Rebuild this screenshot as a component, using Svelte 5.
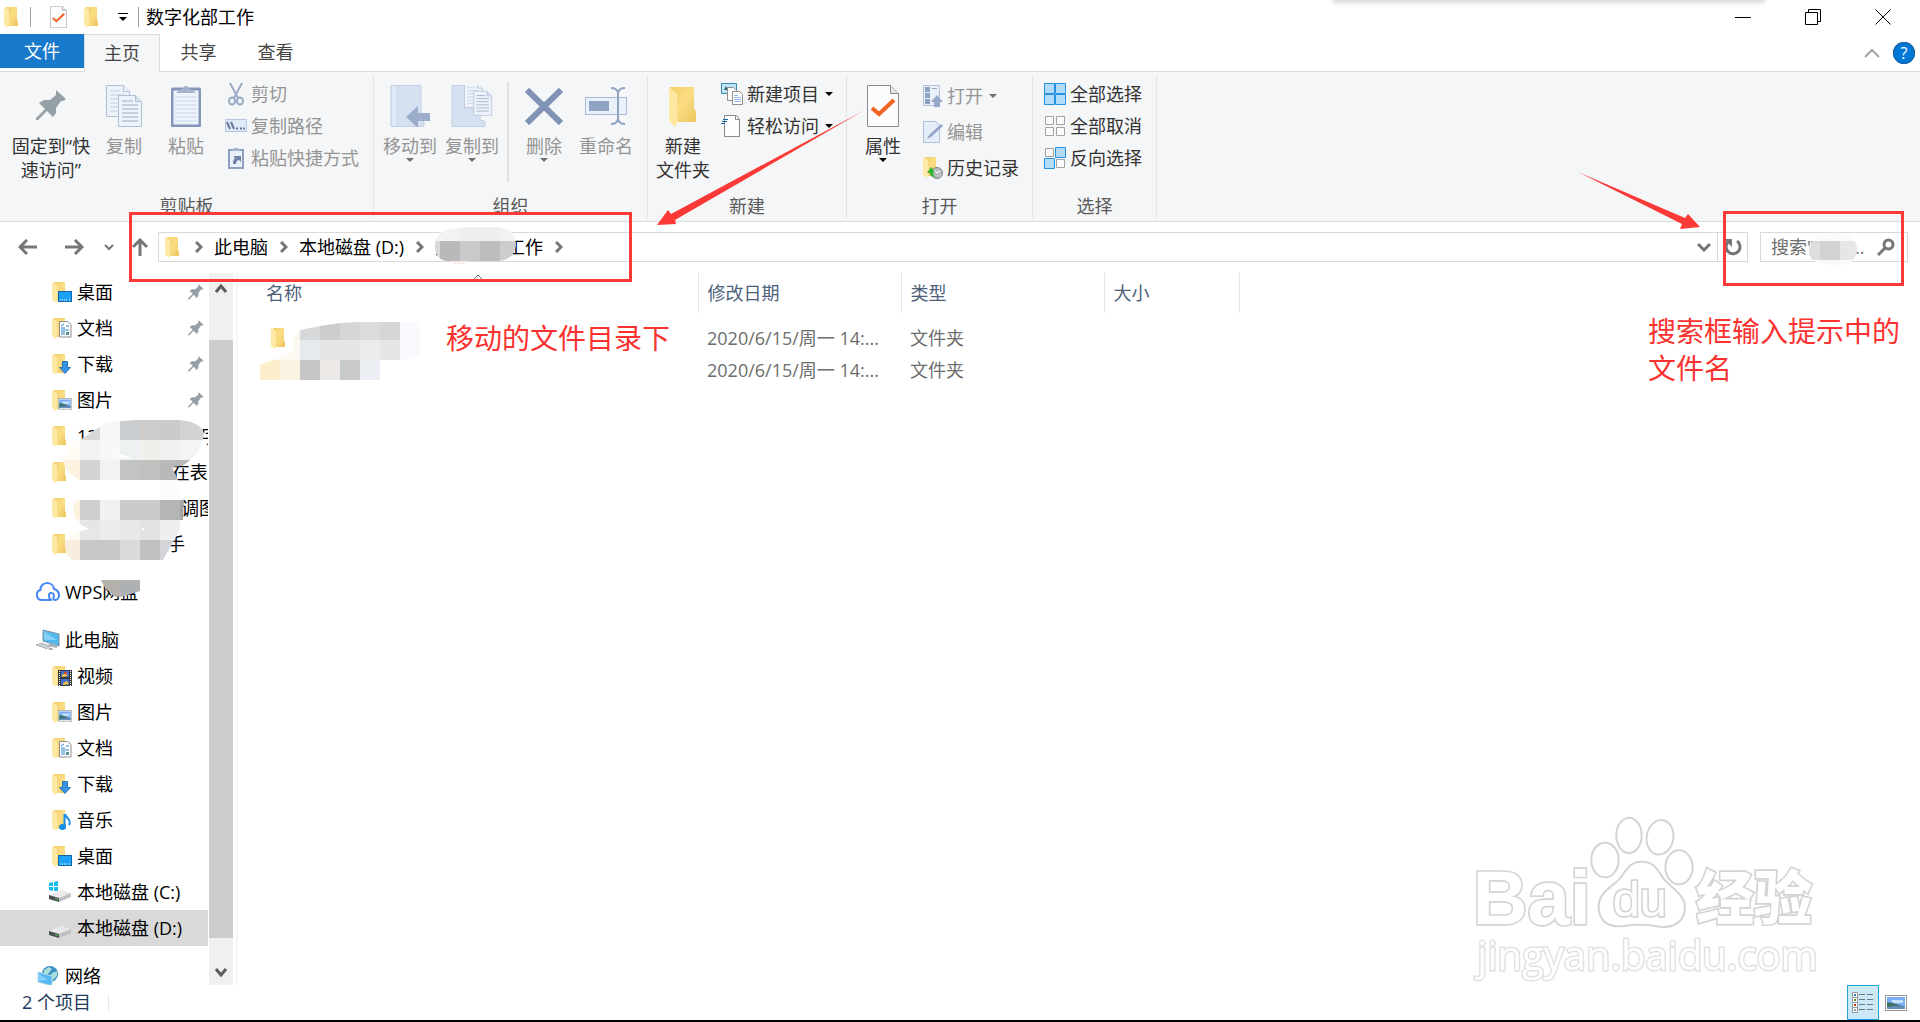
<script>
  const tabs = ['共享', '查看'];

  const quickAccess = [
    { icon: 'desktop', name: '桌面', pinned: true },
    { icon: 'document', name: '文档', pinned: true },
    { icon: 'download', name: '下载', pinned: true },
    { icon: 'picture', name: '图片', pinned: true },
    { icon: 'folder', name: '12\u3000\u3000\u3000\u3000\u3000   字' },
    { icon: 'folder', name: '\u3000\u3000\u3000\u3000\u3000 在表' },
    { icon: 'folder', name: '\u3000\u3000\u3000\u3000\u3000   调图' },
    { icon: 'folder', name: '\u3000\u3000\u3000\u3000\u3000手' },
  ];

  const thisPc = [
    { icon: 'video', name: '视频' },
    { icon: 'picture', name: '图片' },
    { icon: 'document', name: '文档' },
    { icon: 'download', name: '下载' },
    { icon: 'music', name: '音乐' },
    { icon: 'desktop', name: '桌面' },
    { icon: 'system-drive', name: '本地磁盘 (C:)' },
    { icon: 'drive', name: '本地磁盘 (D:)', selected: true },
  ];

  const crumbs = ['此电脑', '本地磁盘 (D:)', '数字化部工作'];

  const columns = ['名称', '修改日期', '类型', '大小'];

  const files = [
    { icon: true, date: '2020/6/15/周一 14:...', type: '文件夹' },
    { icon: false, date: '2020/6/15/周一 14:...', type: '文件夹' },
  ];

  // mosaic blocks: x, y, width, height, colour
  const sideBlocks = [
    [80, 0, 20, 20, '#d8d8d9'], [100, 0, 20, 20, '#f8f7f6'], [120, 0, 20, 20, '#cbced0'],
    [140, 0, 20, 20, '#cdccca'], [160, 0, 20, 20, '#cbcbcb'], [180, 0, 25, 20, '#d2d2d2'],
    [60, 20, 20, 20, '#fffbf5'], [80, 20, 20, 20, '#f3f3f3'], [100, 20, 20, 20, '#f8f8f8'],
    [120, 20, 20, 20, '#eef1f1'], [140, 20, 20, 20, '#efefec'], [160, 20, 20, 20, '#eff1f1'],
    [180, 20, 25, 20, '#f4f4f4'],
    [60, 40, 20, 20, '#fdf2de'], [80, 40, 20, 20, '#d3d4d5'], [100, 40, 20, 20, '#f4f3f1'],
    [120, 40, 20, 20, '#c2c4c2'], [140, 40, 20, 20, '#c1c1bf'], [160, 40, 40, 20, '#b9b9b9'],
    [160, 60, 20, 20, '#fcfcfd'],
    [70, 80, 10, 20, '#fdf4df'], [80, 80, 20, 20, '#cdcecf'], [100, 80, 20, 20, '#f2f1ef'],
    [120, 80, 40, 20, '#c9cbcd'], [160, 80, 20, 20, '#b5b5b5'], [180, 80, 4, 20, '#a6a6a6'],
    [60, 100, 20, 20, '#fdf9f1'], [80, 100, 20, 20, '#e6e6e6'], [100, 100, 20, 20, '#ebebeb'],
    [120, 100, 20, 20, '#e8e8e8'], [140, 100, 20, 20, '#e2e2e2'], [160, 100, 20, 20, '#eef0ef'],
    [60, 120, 20, 20, '#f7eedd'], [80, 120, 40, 20, '#c5c7c9'], [120, 120, 20, 20, '#dcdad9'],
    [140, 120, 20, 20, '#c1c1c1'], [160, 120, 20, 20, '#d4d5d8'],
  ];

  const fileBlocks = [
    [40, 0, 20, 18, '#d7d8d9'], [60, 0, 20, 18, '#cccdcf'], [80, 0, 20, 18, '#d6d6d6'],
    [100, 0, 20, 18, '#dbdbdb'], [120, 0, 20, 18, '#d6d6d5'], [140, 0, 20, 18, '#f9fafd'],
    [30, 0, 10, 18, '#fbf6ec'], [0, 18, 40, 20, '#fcf8f2'], [40, 18, 20, 20, '#e6eaed'],
    [60, 18, 40, 20, '#e6e6e7'], [100, 18, 20, 20, '#ecebec'], [120, 18, 20, 20, '#e7e6e4'],
    [140, 18, 20, 20, '#f8fafd'],
    [0, 38, 20, 20, '#fceecb'], [20, 38, 20, 20, '#f9f2e1'], [40, 38, 20, 20, '#c5c5c5'],
    [60, 38, 20, 20, '#ebe8e5'], [80, 38, 20, 20, '#c8cac9'], [100, 38, 20, 20, '#ebeff3'],
  ];
</script>

{#snippet folderShape()}
  <path d="M2 0h11v13l1 1v5H2z" fill="url(#gold)" />
  <path d="M0 0l5 3v15l-1 3-4-3z" fill="#ffe9a6" />
{/snippet}

{#snippet folder()}
  <svg width="15" height="21" viewBox="0 0 15 21">{@render folderShape()}</svg>
{/snippet}

{#snippet caret(color = '#000')}
  <svg class="caret" width="8" height="4" viewBox="0 0 8 4"><path d="M0 0h8L4 4z" fill={color} /></svg>
{/snippet}

{#snippet pinShape()}
  <path d="M20 0l10 9-3 2-2 0-5 7 0 5-3 4-6-6-9 9-2 0 0-2 9-9-6-6 5-3 6 0 6-5z" fill="#959fa6" />
{/snippet}

{#snippet pages()}
  <g fill="#eef3fb" stroke="#b2c1d8">
    <path d="M.5.5h17l6 6v25H.5z" />
    <path d="M17.5.5v6h6" />
    <path d="M4 6h10M4 10h15M4 14h15M4 18h15M4 22h15M4 26h15" stroke="#c3cfe1" />
    <path d="M12.500 10.500h17l6 6v25h-23z" />
    <path d="M29.500 10.500v6h6" fill="#d8e2f1" />
    <path d="M16 16h11M16 20h16M16 24h16M16 28h16M16 32h16M16 36h16" stroke="#9bacc6" />
  </g>
{/snippet}

{#snippet checkedDoc(w, h)}
  <svg width={w} height={h} viewBox="0 0 32 42">
    <path d="M.5.5h23l8 8v33H.5z" fill="#fcfcfc" stroke="#8c8c8c" />
    <path d="M23.500.5v8h8" fill="#e4e4e4" stroke="#8c8c8c" />
    <path d="M5 23l7 6 15-14" fill="none" stroke="#f26322" stroke-width="4" />
  </svg>
{/snippet}

{#snippet photo()}
  <rect x=".5" y=".5" width="21" height="15" fill="#fff" stroke="#999" />
  <path d="M2 2h18v12H2z" fill="#79aef6" />
  <path d="M6 5h12v3H8z" fill="#c9e2fb" />
  <path d="M2 7l6 1 12 4v2H2z" fill="#3f7367" />
  <path d="M2 12l9-1 9 1v2H2z" fill="#6590bd" />
{/snippet}

{#snippet treeIcon(kind)}
  {#if kind === 'wps'}
    <svg width="24" height="20" viewBox="0 0 24 20" fill="none" stroke="#4486f3" stroke-width="2">
      <path d="M14 18H6C-.5 18-.5 9 4.500 8C4-1 17-1 18 7C25 9 24 18 19 18C17 18 17 16 18 14C18 10 13 10 13 13C13 16 14 18 16 18" />
    </svg>
  {:else if kind === 'pc'}
    <svg width="24" height="22" viewBox="0 0 24 22">
      <path d="M7 1l16 4v12L7 12z" fill="#53b9ef" stroke="#7790a5" />
      <path d="M8 2l13 9-13 0z" fill="#83d0f7" />
      <path d="M14 14l7 2 0 3-9-2z" fill="#a8b4bd" />
      <path d="M0 16l5-2 10 3-4 3z" fill="#c7cdd2" stroke="#a1a9b0" stroke-dasharray="2 1" />
      <path d="M13 19l3 0 1 2-4 0z" fill="#a1a9b0" />
    </svg>
  {:else if kind === 'network'}
    <svg width="24" height="22" viewBox="0 0 24 22">
      <circle cx="14" cy="9" r="8" fill="#3d8fc4" />
      <path d="M8 5l5-3 3 2-4 5-4 0zM16 8l5-2 0 5-4 4-3-3z" fill="#a9ddda" />
      <path d="M2 7l14 4v10L2 17z" fill="#55b9f2" stroke="#b8dcef" />
      <path d="M3 9l9 6-9 1z" fill="#83d0f7" />
    </svg>
  {:else if kind === 'drive' || kind === 'system-drive'}
    <svg width="22" height="22" viewBox="0 0 22 22">
      {#if kind === 'system-drive'}
        <path d="M0 2l4-1v4H0zM5 1l4-1v5H5zM0 6h4v4l-4-1zM5 6h4v4H5z" fill="#13bbee" />
      {/if}
      <path d="M0 14l12-5 10 3-12 5z" fill="#e9e9ea" />
      <path d="M10 17l12-5v4l-12 5z" fill="#bfc0c2" />
      <path d="M0 14l10 3v4L0 18z" fill="#4c4e50" />
      <path d="M6 17l3 1v1l-3-1z" fill="#51d44b" />
    </svg>
  {:else}
    <svg width="20" height="21" viewBox="0 0 20 21">
      {@render folderShape()}
      {#if kind === 'desktop'}
        <rect x="6.500" y="9.500" width="13" height="10" fill="#1ba1f5" stroke="#1267a8" />
        <path d="M8 18h8M17 18h2" stroke="#fff" stroke-dasharray="1 1" />
      {:else if kind === 'document'}
        <path d="M7.500 3.500h8l3.500 3v12.500H7.500z" fill="#fff" stroke="#8e8e8e" />
        <path d="M9 8l3-2M9 10h4M14 8h3M9 12h8M9 14h4M9 16h4" stroke="#2c84c4" />
        <path d="M14 14h3v3h-3z" fill="#5c8f9b" />
      {:else if kind === 'download'}
        <path d="M10.500 7.500h5v6h3l-5.500 6-5.500-6h3z" fill="#3793e4" stroke="#2674b8" />
      {:else if kind === 'picture'}
        <g transform="translate(6 8) scale(.64 .72)">{@render photo()}</g>
      {:else if kind === 'video'}
        <path d="M6 4h14v16H6z" fill="#3a3a3a" />
        <path d="M9 5h8v6H9zM9 13h8v6H9z" fill="#3f6fd3" />
        <path d="M10 9l3-2 3 3-6 1zM11 17l4-2 2 3-6 1z" fill="#f2c23a" />
        <path d="M12 6h3v2h-3z" fill="#d94b2c" />
        <path d="M7.500 5v15M18.500 5v15" stroke="#fff" stroke-dasharray="1 1" />
      {:else if kind === 'music'}
        <path d="M12.500 4v13M13 4c1 5 7 5 4 11" fill="none" stroke="#1590e8" stroke-width="2" />
        <ellipse cx="10.500" cy="17" rx="3.500" ry="3" fill="#1590e8" />
      {/if}
    </svg>
  {/if}
{/snippet}

{#snippet treeItem(item, level)}
  <a href="#tree" class="tree-item" class:child={level === 1} class:selected={item.selected}
    class:drive={item.icon.endsWith('drive')}>
    <span class="tree-icon">{@render treeIcon(item.icon)}</span>
    <span class="tree-name">{item.name}</span>
    {#if item.pinned}
      <svg class="tree-pin" width="16" height="16" viewBox="0 0 31 31">{@render pinShape()}</svg>
    {/if}
  </a>
{/snippet}

{#snippet mosaic(blocks)}
  {#each blocks as [x, y, w, h, fill]}
    <rect {x} {y} width={w} height={h} {fill} />
  {/each}
{/snippet}

{#snippet chevron()}
  <svg class="crumb-arrow" width="8" height="12" viewBox="0 0 8 12"><path d="M1 1l5 5-5 5" /></svg>
{/snippet}

<svg class="defs" width="0" height="0" aria-hidden="true">
  <linearGradient id="gold" x1="0" y1="0" x2="1" y2="1">
    <stop offset="0" stop-color="#f3cf6b" />
    <stop offset=".5" stop-color="#fbdd84" />
    <stop offset="1" stop-color="#ecc45c" />
  </linearGradient>
</svg>

<div class="window">
  <header class="titlebar">
    <span class="app-icon">{@render folder()}</span>
    <span class="bar"></span>
    <button class="quick" aria-label="属性">{@render checkedDoc(17, 22)}</button>
    <button class="quick" aria-label="新建文件夹">{@render folder()}</button>
    <button class="quick narrow" aria-label="自定义快速访问工具栏">
      <svg width="10" height="8" viewBox="0 0 10 8"><path d="M0 0h10v1H0zM1 4h8L5 8z" /></svg>
    </button>
    <span class="bar"></span>
    <h1>数字化部工作</h1>
    <div class="controls">
      <button aria-label="最小化"><svg width="16" height="16"><path d="M0 8.500h16" /></svg></button>
      <button aria-label="还原">
        <svg width="16" height="16"><path d="M.5 3.500h12v12H.5zM3.500 3.500v-3h12v12h-3" /></svg>
      </button>
      <button aria-label="关闭"><svg width="16" height="16"><path d="M.5.5l15 15M15.500.5l-15 15" /></svg></button>
    </div>
    <div class="top-shadow"></div>
  </header>

  <nav class="tabs">
    <button class="tab file">文件</button>
    <button class="tab active">主页</button>
    {#each tabs as tab}
      <button class="tab">{tab}</button>
    {/each}
    <div class="tabs-end">
      <svg width="16" height="10" viewBox="0 0 16 10" fill="none" stroke="#a5a5a5" stroke-width="2">
        <path d="M1 9l7-7 7 7" />
      </svg>
      <button class="help" aria-label="帮助">?</button>
    </div>
  </nav>

  <section class="ribbon">
    <div class="group clipboard">
      <div class="tools">
        <button class="big pin">
          <svg width="31" height="42" viewBox="0 -5 31 42">{@render pinShape()}</svg>
          <span>固定到“快<br />速访问”</span>
        </button>
        <button class="big copy" disabled>
          <svg width="36" height="42" viewBox="0 0 36 42">{@render pages()}</svg>
          <span>复制</span>
        </button>
        <button class="big paste" disabled>
          <svg width="30" height="42" viewBox="0 0 30 42">
            <rect x="1" y="4" width="28" height="37" rx="2" fill="#eef3fb" stroke="#8496b9" stroke-width="3" />
            <path d="M4 12h22M4 16h22M4 20h22M4 24h22M4 28h22M4 32h22M4 36h22" stroke="#cbd7e9" />
            <path d="M5 8l5-4h2a3 3 0 0 1 6 0h2l5 4z" fill="#a5b4cd" />
          </svg>
          <span>粘贴</span>
        </button>
        <div class="small-list">
          <button class="small" disabled>
            <svg width="22" height="24" viewBox="0 0 22 24" fill="none" stroke="#9aabc6" stroke-width="2">
              <path d="M5 1l8 15M17 1L9 16" />
              <ellipse cx="7" cy="19" rx="3" ry="3.500" /><ellipse cx="15" cy="19" rx="3" ry="3.500" />
            </svg>
            剪切
          </button>
          <button class="small" disabled>
            <svg width="22" height="14" viewBox="0 0 22 14">
              <rect x=".5" y=".5" width="21" height="12" fill="#dfe9f7" stroke="#b7c6de" />
              <path d="M2 3l3 7M6 3l3 7M11 9.500h2M15 9.500h2M18 9.500h2" stroke="#67799b" stroke-width="2" />
            </svg>
            复制路径
          </button>
          <button class="small" disabled>
            <svg width="22" height="24" viewBox="0 0 22 24">
              <rect x="4" y="4" width="14" height="18" fill="#e9f0fa" stroke="#8ea0c0" stroke-width="2" />
              <path d="M6 5l3-3h4l3 3z" fill="#a5b4cd" />
              <path d="M8 18c0-4 1-6 4-6H9v-2h7v6l-2-2c-2 0-3 2-3 4z" fill="#6f83a8" />
            </svg>
            粘贴快捷方式
          </button>
        </div>
      </div>
      <div class="group-name">剪贴板</div>
    </div>

    <div class="group organize">
      <div class="tools">
        <button class="big" disabled>
          <svg width="40" height="42" viewBox="0 0 40 42">
            <path d="M1 .5h30v34l3 2v5H1z" fill="#d5e0f0" stroke="#c3d1e6" />
            <path d="M4 1v40" stroke="#e4ecf7" stroke-width="3" />
            <path d="M16 32l12-11v7h12v8H28v7z" fill="#9badca" />
          </svg>
          <span>移动到</span>
          {@render caret('#6f6f6f')}
        </button>
        <button class="big" disabled>
          <svg width="42" height="42" viewBox="0 0 42 42">
            <path d="M1 .5h28v34l5 2v5H1z" fill="#d5e0f0" stroke="#c3d1e6" />
            <g transform="translate(13 -2) scale(.78)">{@render pages()}</g>
          </svg>
          <span>复制到</span>
          {@render caret('#6f6f6f')}
        </button>
        <span class="divider"></span>
        <button class="big" disabled>
          <svg width="38" height="42" viewBox="0 0 38 42">
            <path d="M2 5l34 33M36 5L2 38" stroke="#8193b5" stroke-width="6" />
          </svg>
          <span>删除</span>
          {@render caret('#6f6f6f')}
        </button>
        <button class="big" disabled>
          <svg width="42" height="42" viewBox="0 0 42 42" fill="none">
            <rect x=".5" y="12.500" width="41" height="17" fill="#eaf1fb" stroke="#a9bad4" />
            <path d="M4 16h20v10H4z" fill="#8fa3c3" />
            <path d="M26 3q6 0 7 5q1-5 7-5M26 39q6 0 7-5q1 5 7 5M33 7v28" stroke="#92a4c3" stroke-width="2" />
          </svg>
          <span>重命名</span>
        </button>
      </div>
      <div class="group-name">组织</div>
    </div>

    <div class="group create">
      <div class="tools">
        <button class="big">
          <svg width="30" height="42" viewBox="0 0 30 42">
            <path d="M2 2h24v22l2 2v11H2z" fill="url(#gold)" />
            <path d="M1 2l8 7v29l-2 4-6-6z" fill="#ffe8a3" />
          </svg>
          <span>新建<br />文件夹</span>
        </button>
        <div class="small-list">
          <button class="small">
            <svg width="22" height="24" viewBox="0 0 22 24">
              <path d="M.5 1.500h15v10H.5z" fill="#bfe6f8" stroke="#3b87ad" />
              <path d="M3 8l2-4 2 4z" fill="#315d6e" />
              <path d="M6.500 5.500h6l3 3v10h-9z" fill="#fff" stroke="#8e8e8e" />
              <path d="M11.500 9.500h7l3 3v10h-10z" fill="#fff" stroke="#8e8e8e" />
              <path d="M13 13.500h4M13 15.500h7M13 17.500h7M13 19.500h7" stroke="#8fb9e0" />
            </svg>
            新建项目 {@render caret()}
          </button>
          <button class="small">
            <svg width="22" height="24" viewBox="0 0 22 24">
              <path d="M3.500 1.500h12l3 4v17h-15z" fill="#fdfdfd" stroke="#8a8a8a" />
              <path d="M14.500 1.500v4h4" fill="none" stroke="#8a8a8a" />
              <path d="M2 5.500h5M1 7.500h5M0 9.500h4" stroke="#1f68a8" />
            </svg>
            轻松访问 {@render caret()}
          </button>
        </div>
      </div>
      <div class="group-name">新建</div>
    </div>

    <div class="group open">
      <div class="tools">
        <button class="big">
          {@render checkedDoc(32, 42)}
          <span>属性</span>
          {@render caret()}
        </button>
        <div class="small-list loose">
          <button class="small" disabled>
            <svg width="22" height="24" viewBox="0 0 22 24">
              <path d="M2.500 1.500h16v20h-16z" fill="#e9f0fa" stroke="#b2c1d8" />
              <path d="M4 3h5v5H4zM4 9h5v5H4zM4 15h5v5H4zM11 4h5v1h-5z" fill="#8fa2c1" />
              <path d="M16 11l6 7h-3v5h-6v-5h-3z" fill="#95a8c8" />
            </svg>
            打开 {@render caret('#6f6f6f')}
          </button>
          <button class="small" disabled>
            <svg width="22" height="24" viewBox="0 0 22 24">
              <path d="M2.500 1.500h12l4 4v17h-16z" fill="#e4edf9" stroke="#b2c1d8" />
              <path d="M6 19l2-4L20 4l2 2L10 17z" fill="#93a6c4" />
            </svg>
            编辑
          </button>
          <button class="small">
            <svg width="22" height="24" viewBox="0 0 22 24">
              <g transform="translate(2 1)">{@render folderShape()}</g>
              <circle cx="16" cy="17" r="5.500" fill="#b9bdc0" stroke="#7e8285" />
              <path d="M13 14l3 3 3-2" fill="none" stroke="#fff" />
              <path d="M6 17l4-6 4 5h-2c0 2 1 4 2 5-4 0-5-2-5-4z" fill="#30b52f" />
            </svg>
            历史记录
          </button>
        </div>
      </div>
      <div class="group-name">打开</div>
    </div>

    <div class="group select">
      <div class="tools">
        <div class="small-list">
          <button class="small">
            <svg width="22" height="22" viewBox="0 0 22 22" fill="#b3dcfb" stroke="#2492e0">
              <path d="M.5.5h10v10H.5zM11.500.5h10v10h-10zM.5 11.500h10v10H.5zM11.500 11.500h10v10h-10z" />
            </svg>
            全部选择
          </button>
          <button class="small">
            <svg width="22" height="22" viewBox="0 0 22 22" fill="#fbfbfb" stroke="#a4a4a4">
              <path d="M1.500 1.500h8v8h-8zM12.500 1.500h8v8h-8zM1.500 12.500h8v8h-8zM12.500 12.500h8v8h-8z" />
            </svg>
            全部取消
          </button>
          <button class="small">
            <svg width="22" height="22" viewBox="0 0 22 22" fill="#b3dcfb" stroke="#2492e0">
              <path d="M1.500 1.500h8v8h-8zM12.500 12.500h8v8h-8z" fill="#fbfbfb" stroke="#a4a4a4" />
              <path d="M11.500.5h10v10h-10zM.5 11.500h10v10H.5z" />
            </svg>
            反向选择
          </button>
        </div>
      </div>
      <div class="group-name">选择</div>
    </div>
  </section>

  <section class="location">
    <button class="nav back" aria-label="后退">
      <svg width="20" height="16" viewBox="0 0 20 16"><path d="M19 8H2M9 1L2 8l7 7" /></svg>
    </button>
    <button class="nav forward" aria-label="前进">
      <svg width="20" height="16" viewBox="0 0 20 16"><path d="M1 8h17M11 1l7 7-7 7" /></svg>
    </button>
    <button class="nav recent" aria-label="最近浏览的位置">
      <svg width="10" height="7" viewBox="0 0 10 7"><path d="M1 1l4 4 4-4" /></svg>
    </button>
    <button class="nav up" aria-label="上移">
      <svg width="16" height="18" viewBox="0 0 16 18"><path d="M8 18V2M1 9l7-7 7 7" /></svg>
    </button>
    <div class="address">
      {@render folder()}
      {#each crumbs as crumb}
        {@render chevron()}
        <a href="#crumb">{crumb}</a>
      {/each}
      {@render chevron()}
      <svg class="address-mosaic" width="82" height="38" viewBox="0 0 82 38">
        <clipPath id="addr-blob"><path d="M16 2Q50-2 70 1Q82 5 82 18Q80 34 62 34L12 34Q0 32 1 17Q2 5 16 2z" /></clipPath>
        <g clip-path="url(#addr-blob)">
          <path d="M0 0h82v14H0z" fill="#f2f2f2" /><path d="M26 0h40v14H26z" fill="#eee" />
          <path d="M0 14h6v20H0z" fill="#dadada" /><path d="M6 14h20v20H6z" fill="#b9b9b9" />
          <path d="M26 14h20v20H26z" fill="#c9c9c9" /><path d="M46 14h20v20H46z" fill="#bdbdbd" />
          <path d="M66 14h16v20H66z" fill="#cdcdcd" />
        </g>
        <path d="M16 34h18l-4 3h-9z" fill="#fbeaea" />
      </svg>
      <svg class="address-drop" width="14" height="10" viewBox="0 0 14 10"><path d="M1 2l6 6 6-6" /></svg>
    </div>
    <button class="refresh" aria-label="刷新">
      <svg width="20" height="20" viewBox="0 0 20 20">
        <path d="M14 4a7 7 0 1 1-9 1" fill="none" stroke="#767676" stroke-width="3" />
        <path d="M1 2h8v8z" fill="#767676" />
      </svg>
    </button>
    <div class="search">
      <input type="text" aria-label="搜索" placeholder={'搜索"数字...'} />
      <svg class="search-mosaic" width="50" height="34" viewBox="0 0 50 34">
        <clipPath id="search-blob"><path d="M22 1Q48-1 49 17Q48 28 40 32Q24 36 8 30Q0 26 1 17Q4 4 22 1z" /></clipPath>
        <g clip-path="url(#search-blob)">
          <path d="M0 0h50v34H0z" fill="#fafafa" />
          <path d="M0 9h12v19H0z" fill="#dedede" /><path d="M12 9h20v19H12z" fill="#d2d2d2" />
          <path d="M32 9h18v19H32z" fill="#e6e6e6" />
        </g>
      </svg>
      <svg class="lens" width="18" height="18" viewBox="0 0 18 18" fill="none" stroke="#767676">
        <circle cx="11.500" cy="6.500" r="4.500" stroke-width="3" /><path d="M8 10l-7 7" stroke-width="3" />
      </svg>
    </div>
  </section>

  <main class="body">
    <aside class="tree">
      <div class="tree-group">
        {#each quickAccess as item}{@render treeItem(item, 1)}{/each}
        <svg class="side-mosaic" width="210" height="140" viewBox="0 0 210 140">
          <clipPath id="side-blob">
            <path d="M80 20L107 2L137 0H180Q200 2 204 13Q202 34 182 46L172 47L178 60L180 80H184L183 100H180V110L163 140H72Q62 132 66 120Q72 112 90 109Q74 104 73 90Q73 82 78 80H160V60H80Q62 50 63 38Q70 24 80 20z" />
          </clipPath>
          <g clip-path="url(#side-blob)">{@render mosaic(sideBlocks)}</g>
          <path d="M114 35q10-1 18 4q-10 0-18-4zM140 110l5-3-1 3z" fill="#fff" />
        </svg>
      </div>
      <div class="tree-group wps">
        {@render treeItem({ icon: 'wps', name: 'WPS网盘' }, 0)}
        <svg class="wps-mosaic" width="39" height="17" viewBox="0 0 39 17">
          <path d="M0 0h19v17l-7-2-8-7z" fill="#b5b2ae" /><path d="M19 0h20v11l-12 4-8 2z" fill="#adb1b4" />
        </svg>
      </div>
      <div class="tree-group">
        {@render treeItem({ icon: 'pc', name: '此电脑' }, 0)}
        {#each thisPc as item}{@render treeItem(item, 1)}{/each}
      </div>
      <div class="tree-group">{@render treeItem({ icon: 'network', name: '网络' }, 0)}</div>
    </aside>

    <div class="scrollbar">
      <button aria-label="向上滚动"><svg width="12" height="9" viewBox="0 0 12 9"><path d="M1 8l5-6 5 6" /></svg></button>
      <div class="thumb"></div>
      <button class="down" aria-label="向下滚动"><svg width="12" height="9" viewBox="0 0 12 9"><path d="M1 1l5 6 5-6" /></svg></button>
    </div>

    <div class="files">
      <table>
        <thead>
          <tr>
            {#each columns as column}<th>{column}</th>{/each}
          </tr>
        </thead>
        <tbody>
          {#each files as file}
            <tr>
              <td class="name">{#if file.icon}{@render folder()}{/if}</td>
              <td>{file.date}</td>
              <td>{file.type}</td>
              <td></td>
            </tr>
          {/each}
        </tbody>
      </table>
      <svg class="sort" width="10" height="6" viewBox="0 0 10 6"><path d="M1 5l4-4 4 4" fill="none" stroke="#6b6b6b" /></svg>
      <svg class="file-mosaic" width="160" height="58" viewBox="0 0 160 58">
        <clipPath id="file-blob">
          <path d="M33 17L40 8L60 4L80 1L100 0H160V34L148 36L144 38H120V58H0V43L17 36L33 30z" />
        </clipPath>
        <g clip-path="url(#file-blob)">{@render mosaic(fileBlocks)}</g>
      </svg>
    </div>
  </main>

  <footer class="status">
    <span class="count">2 个项目</span>
    <span class="status-bar"></span>
    <button class="view on" aria-label="详细信息">
      <svg width="22" height="22" viewBox="0 0 22 22">
        <path d="M.5.500h5v5h-5zM.5 5.500h5v5h-5zM.5 10.500h5v5h-5zM.5 15.500h5v5h-5z" fill="#fff" stroke="#999" />
        <path d="M2 2h2v2H2z" fill="#2e7fc0" /><path d="M2 7h2v2H2z" fill="#6b8e23" />
        <path d="M2 12h2v2H2z" fill="#c03a2e" /><path d="M2 17h2v2H2z" fill="#8aa" />
        <path d="M7 2.500h6M15 2.500h6M7 7.500h6M15 7.500h6M7 12.500h6M15 12.500h6M7 17.500h6M15 17.500h6" stroke="#6d7880" />
      </svg>
    </button>
    <button class="view" aria-label="大缩略图">
      <svg width="22" height="16" viewBox="0 0 22 16">{@render photo()}</svg>
    </button>
  </footer>

  <!-- red notes drawn on top of the window -->
  <div class="mark mark-path"></div>
  <div class="mark mark-search"></div>
  <svg class="arrow arrow-path" width="206" height="116" viewBox="0 0 206 116">
    <path d="M0 115L11 100L14 104L206 1L18 110L19 114z" />
  </svg>
  <svg class="arrow arrow-search" width="122" height="58" viewBox="0 0 122 58">
    <path d="M0 0L107 46L110 42L122 55L102 57L104 52z" />
  </svg>
  <p class="note note-path">移动的文件目录下</p>
  <p class="note note-search">搜索框输入提示中的<br />文件名</p>

  <svg class="watermark" width="480" height="200" viewBox="0 0 1440 600">
    <filter id="soft"><feGaussianBlur stdDeviation="1.500" /></filter>
    <g filter="url(#soft)">
      <text x="98" y="402" class="bai">Bai</text>
      <ellipse cx="495" cy="210" rx="41" ry="52" />
      <ellipse cx="567" cy="136" rx="38" ry="53" />
      <ellipse cx="660" cy="142" rx="40" ry="52" transform="rotate(10 660 142)" />
      <ellipse cx="717" cy="232" rx="41" ry="51" />
      <path d="M605 215C560 215 555 255 530 275C500 300 474 315 476 355C480 400 510 412 550 408C590 402 620 402 660 410C700 415 735 395 735 350C735 315 690 290 670 265C650 235 640 215 605 215z" />
      <text x="518" y="378" class="du">du</text>
      <text x="768" y="386" class="jingyan">经验</text>
      <text x="112" y="540" class="site">jingyan.baidu.com</text>
    </g>
  </svg>
</div>

<style>
  :global(body) {
    margin: 0;
    background: #fff;
  }
  .defs {
    position: absolute;
  }
  .window {
    position: relative;
    box-sizing: border-box;
    display: flex;
    flex-direction: column;
    height: 100vh;
    overflow: hidden;
    border-bottom: 2px solid #000;
    font: 18px/24px "Open Sans", "Noto Sans CJK SC", sans-serif;
    color: #000;
  }
  .window :global(svg) {
    display: block;
    flex: none;
  }
  button {
    padding: 0;
    border: none;
    background: transparent;
    font: inherit;
    color: inherit;
  }
  a {
    color: inherit;
    text-decoration: none;
  }

  .titlebar {
    display: flex;
    align-items: center;
    height: 34px;
  }
  .app-icon {
    padding: 0 11px 0 4px;
  }
  .bar {
    width: 1px;
    height: 20px;
    background: #a0a0a0;
  }
  .quick {
    display: flex;
    justify-content: center;
    width: 33px;
  }
  .bar + .quick {
    margin-left: 11px;
  }
  .narrow {
    width: 30px;
  }
  h1 {
    margin: 0 0 0 7px;
    font: inherit;
  }
  .controls {
    display: flex;
    margin-left: auto;
    padding-right: 2px;
  }
  .controls button {
    display: flex;
    justify-content: center;
    width: 70px;
  }
  .controls path {
    fill: none;
    stroke: #000;
  }
  .top-shadow {
    position: absolute;
    top: -6px;
    right: 156px;
    width: 430px;
    height: 7px;
    background: #e0e0e0;
    box-shadow: 0 1px 4px 1px #d8d8d8;
  }

  .tabs {
    display: flex;
    height: 37px;
    border-bottom: 1px solid #dadbdc;
    color: #444;
  }
  .tab {
    width: 77px;
    padding-bottom: 2px;
  }
  .file {
    width: 84px;
    height: 34px;
    padding-bottom: 0;
    background: #1979ca;
    color: #fff;
  }
  .active {
    box-sizing: border-box;
    width: 76px;
    height: 38px;
    border: 1px solid #dadbdc;
    border-bottom: none;
    background: #f5f6f7;
  }
  .tabs-end {
    display: flex;
    align-items: center;
    gap: 13px;
    margin-left: auto;
    padding-right: 5px;
  }
  .help {
    width: 22px;
    height: 22px;
    border-radius: 11px;
    background: #0078d7;
    box-shadow: inset 0 0 0 1px #1c5f9b;
    color: #fff;
    font-size: 16px;
    line-height: 22px;
  }

  .ribbon {
    display: flex;
    padding: 3px 0;
    border-bottom: 1px solid #dadbdc;
    background: #f5f6f7;
    color: #333;
  }
  .group {
    border-right: 1px solid #e2e3e4;
  }
  .tools {
    display: flex;
    align-items: flex-start;
    height: 119px;
  }
  .clipboard .tools {
    padding: 0 14px 0 8px;
  }
  .organize .tools {
    padding: 0 10px 0 5px;
  }
  .create .tools {
    padding: 0 13px 0 4px;
  }
  .open .tools {
    padding: 0 13px 0 5px;
  }
  .select .tools {
    padding: 0 14px 0 4px;
  }
  .big {
    display: flex;
    flex-direction: column;
    align-items: center;
    width: 62px;
    padding-top: 10px;
    white-space: nowrap;
  }
  .big > span {
    margin-top: 7px;
  }
  .pin {
    width: 86px;
  }
  .copy {
    width: 60px;
  }
  .paste {
    width: 64px;
  }
  button:disabled {
    color: #949494;
  }
  .small-list {
    margin-left: 7px;
    padding-top: 3px;
  }
  .loose {
    display: grid;
    gap: 4px;
    padding-top: 5px;
  }
  .small {
    display: flex;
    align-items: center;
    gap: 4px;
    height: 32px;
    white-space: nowrap;
  }
  .small .caret {
    margin-left: 2px;
  }
  .divider {
    width: 2px;
    height: 100px;
    margin: 7px 4px 0;
    background: #e0e1e2;
  }
  .group-name {
    color: #5a5a5a;
    text-align: center;
  }

  .location {
    display: flex;
    align-items: center;
    height: 50px;
    padding: 0 12px 0 10px;
  }
  .nav {
    display: flex;
    justify-content: center;
    width: 36px;
  }
  .nav path {
    fill: none;
    stroke: #767676;
    stroke-width: 3;
  }
  .forward {
    width: 56px;
  }
  .recent {
    width: 14px;
  }
  .recent path {
    stroke-width: 2;
  }
  .up {
    margin-left: 6px;
  }
  .address {
    position: relative;
    box-sizing: border-box;
    flex: 1;
    display: flex;
    align-items: center;
    height: 30px;
    padding: 0 6px;
    border: 1px solid #d9d9d9;
  }
  .crumb-arrow {
    margin: 0 11px 0 15px;
  }
  a + .crumb-arrow {
    margin: 0 11px 0 12px;
  }
  .crumb-arrow path,
  .address-drop path {
    fill: none;
    stroke: #767676;
    stroke-width: 3;
  }
  .address-drop {
    margin-left: auto;
  }
  .address-mosaic {
    position: absolute;
    left: 275px;
    top: -6px;
  }
  .refresh {
    box-sizing: border-box;
    display: flex;
    align-items: center;
    justify-content: center;
    width: 30px;
    height: 30px;
    border: 1px solid #d9d9d9;
    border-left: none;
  }
  .search {
    position: relative;
    box-sizing: border-box;
    display: flex;
    align-items: center;
    width: 148px;
    height: 30px;
    margin-left: 12px;
    padding: 0 12px 0 10px;
    border: 1px solid #d9d9d9;
  }
  input {
    flex: 1;
    min-width: 0;
    padding: 0;
    border: none;
    outline: none;
    background: transparent;
    font: inherit;
  }
  input::placeholder {
    color: #6d6d6d;
    opacity: 1;
  }
  .search-mosaic {
    position: absolute;
    left: 47px;
    top: -1px;
  }

  .body {
    flex: 1;
    display: flex;
    min-height: 0;
  }
  .tree {
    width: 208px;
    padding-top: 2px;
    overflow: hidden;
  }
  .tree-group {
    position: relative;
    margin-bottom: 12px;
  }
  .tree-item {
    display: flex;
    align-items: center;
    height: 36px;
    padding-left: 36px;
    white-space: pre;
    overflow: hidden;
  }
  .tree-icon {
    flex: none;
    width: 29px;
  }
  .tree-name {
    flex: none;
  }
  .child {
    padding-left: 52px;
  }
  .child .tree-icon {
    width: 25px;
  }
  .child.drive {
    padding-left: 49px;
  }
  .drive .tree-icon {
    width: 28px;
  }
  .selected {
    background: #d9d9d9;
  }
  .tree-pin {
    margin: 0 4px 0 auto;
  }
  .side-mosaic {
    position: absolute;
    left: 0;
    top: 146px;
  }
  .wps-mosaic {
    position: absolute;
    left: 101px;
    top: 6px;
  }
  .scrollbar {
    display: flex;
    flex-direction: column;
    width: 24px;
    margin: 1px 3px 0 1px;
    background: #f0f0f0;
  }
  .scrollbar button {
    display: flex;
    justify-content: center;
    height: 67px;
    padding-top: 11px;
  }
  .scrollbar .down {
    height: 47px;
    padding-top: 30px;
  }
  .scrollbar path {
    fill: none;
    stroke: #5d5d5d;
    stroke-width: 3;
  }
  .thumb {
    flex: 1;
    background: #cdcdcd;
  }

  .files {
    position: relative;
    flex: 1;
    margin-top: 1px;
    border-left: 2px solid #f5f5f5;
  }
  table {
    width: 1001px;
    table-layout: fixed;
    border-collapse: collapse;
    text-align: left;
    white-space: nowrap;
  }
  th {
    box-sizing: border-box;
    width: 203px;
    height: 40px;
    padding: 0 0 0 9px;
    border-right: 1px solid #e5e5e5;
    font-weight: 400;
    color: #4c607a;
  }
  th:first-child {
    width: 460px;
    padding-left: 28px;
  }
  th:last-child {
    width: 135px;
  }
  tbody::before {
    content: "";
    display: block;
    height: 9px;
  }
  td {
    height: 32px;
    padding: 0 0 0 9px;
    color: #6d6d6d;
  }
  .name {
    padding-left: 33px;
  }
  .sort {
    position: absolute;
    left: 235px;
    top: 1px;
  }
  .file-mosaic {
    position: absolute;
    left: 22px;
    top: 49px;
  }

  .status {
    display: flex;
    align-items: center;
    height: 35px;
    padding-right: 7px;
    color: #1e395b;
  }
  .count {
    padding: 0 0 2px 22px;
  }
  .status-bar {
    width: 1px;
    height: 18px;
    margin: 0 auto 0 17px;
    background: #e8e8e8;
  }
  .view {
    box-sizing: border-box;
    display: flex;
    align-items: center;
    justify-content: center;
    width: 34px;
    height: 35px;
  }
  .on {
    width: 32px;
    border: 1px solid #26a0da;
    background: #cbe8f6;
  }

  .mark {
    position: absolute;
    box-sizing: border-box;
    border: 3px solid #fb3a38;
    pointer-events: none;
  }
  .mark-path {
    left: 129px;
    top: 212px;
    width: 503px;
    height: 70px;
  }
  .mark-search {
    right: 16px;
    top: 211px;
    width: 181px;
    height: 75px;
  }
  .arrow {
    position: absolute;
    fill: #fb3a38;
    pointer-events: none;
  }
  .arrow-path {
    left: 657px;
    top: 110px;
  }
  .arrow-search {
    right: 220px;
    top: 172px;
  }
  .note {
    position: absolute;
    margin: 0;
    font-size: 28px;
    line-height: 37px;
    color: #fb3230;
  }
  .note-path {
    left: 446px;
    top: 320px;
  }
  .note-search {
    right: 20px;
    top: 313px;
  }
  .watermark {
    position: absolute;
    right: 0;
    bottom: 30px;
    pointer-events: none;
    fill: #fff;
    stroke: #d4d4d4;
    stroke-width: 6;
  }
  .watermark text {
    paint-order: stroke;
    stroke-width: 10;
  }
  .bai {
    font: 700 228px "Liberation Sans", sans-serif;
  }
  .du {
    font: 400 146px "Liberation Sans", sans-serif;
  }
  .jingyan {
    font: 900 174px "Noto Sans CJK SC", sans-serif;
  }
  .watermark .site {
    font: 400 120px "Open Sans", sans-serif;
    stroke: #e2e2e2;
    stroke-width: 9;
  }
</style>
